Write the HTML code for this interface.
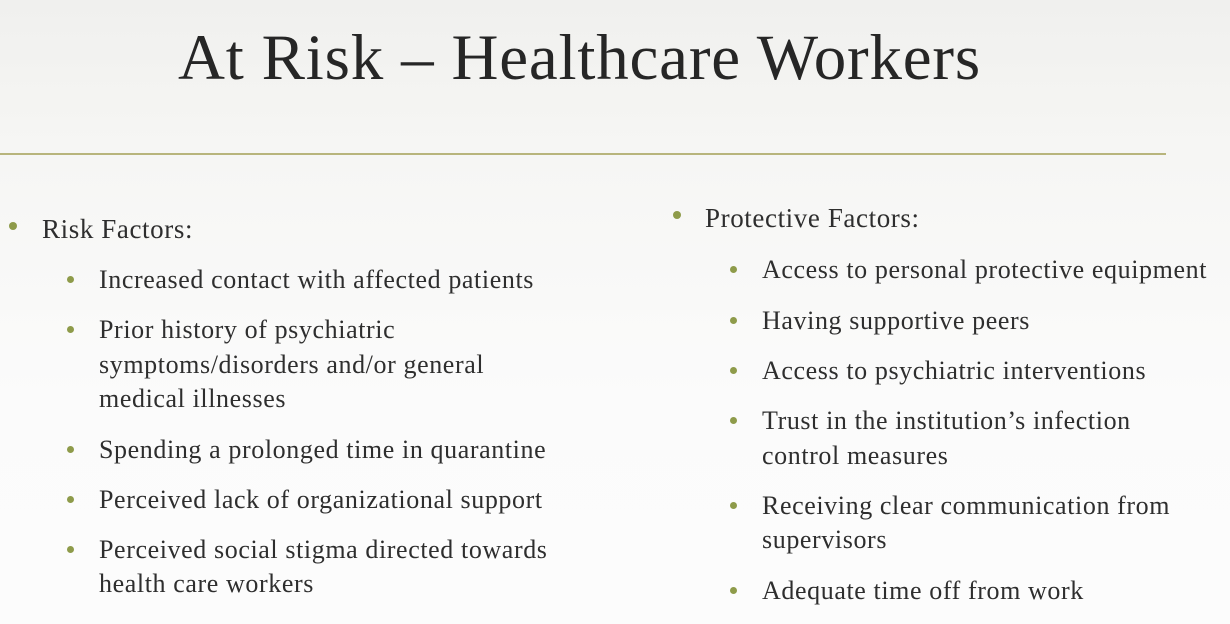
<!DOCTYPE html>
<html><head><meta charset="utf-8"><style>
body{margin:0;width:1230px;height:624px;overflow:hidden;background:linear-gradient(#f0f0ee 0px,#f6f6f4 150px,#fbfbfb 400px,#fcfcfc 624px);font-family:"Liberation Serif",serif;color:#2e2e2e;position:relative}
.t{position:absolute;left:178px;top:18px;font-size:65px;line-height:80px;white-space:nowrap;color:#262626;letter-spacing:0.8px}
.hr{position:absolute;left:0;width:1166px;top:153px;height:2px;background:#b8b57c}
.l{position:absolute;font-size:26px;line-height:34px;white-space:nowrap;letter-spacing:0.6px}
.b{position:absolute;width:8px;height:8px;border-radius:50%;background:#8e9b4a}
.b2{width:7px;height:7px}
</style></head><body>
<div class="t">At Risk – Healthcare Workers</div>
<div class="hr"></div>

<div class="b" style="left:9px;top:222px"></div>
<div class="l" style="left:42px;top:212px;font-size:27px">Risk Factors:</div>

<div class="b b2" style="left:67px;top:276px"></div>
<div class="l" style="left:99px;top:263px">Increased contact with affected patients</div>
<div class="b b2" style="left:67px;top:326px"></div>
<div class="l" style="left:99px;top:313px">Prior history of psychiatric</div>
<div class="l" style="left:99px;top:348px">symptoms/disorders and/or general</div>
<div class="l" style="left:99px;top:382px">medical illnesses</div>
<div class="b b2" style="left:67px;top:446px"></div>
<div class="l" style="left:99px;top:433px">Spending a prolonged time in quarantine</div>
<div class="b b2" style="left:67px;top:496px"></div>
<div class="l" style="left:99px;top:483px">Perceived lack of organizational support</div>
<div class="b b2" style="left:67px;top:546px"></div>
<div class="l" style="left:99px;top:533px">Perceived social stigma directed towards</div>
<div class="l" style="left:99px;top:567px">health care workers</div>

<div class="b" style="left:673px;top:211px"></div>
<div class="l" style="left:705px;top:201px;font-size:27px">Protective Factors:</div>

<div class="b b2" style="left:730px;top:266px"></div>
<div class="l" style="left:762px;top:253px">Access to personal protective equipment</div>
<div class="b b2" style="left:730px;top:317px"></div>
<div class="l" style="left:762px;top:304px">Having supportive peers</div>
<div class="b b2" style="left:730px;top:367px"></div>
<div class="l" style="left:762px;top:354px">Access to psychiatric interventions</div>
<div class="b b2" style="left:730px;top:417px"></div>
<div class="l" style="left:762px;top:404px">Trust in the institution’s infection</div>
<div class="l" style="left:762px;top:439px">control measures</div>
<div class="b b2" style="left:730px;top:502px"></div>
<div class="l" style="left:762px;top:489px">Receiving clear communication from</div>
<div class="l" style="left:762px;top:523px">supervisors</div>
<div class="b b2" style="left:730px;top:587px"></div>
<div class="l" style="left:762px;top:574px">Adequate time off from work</div>
</body></html>
